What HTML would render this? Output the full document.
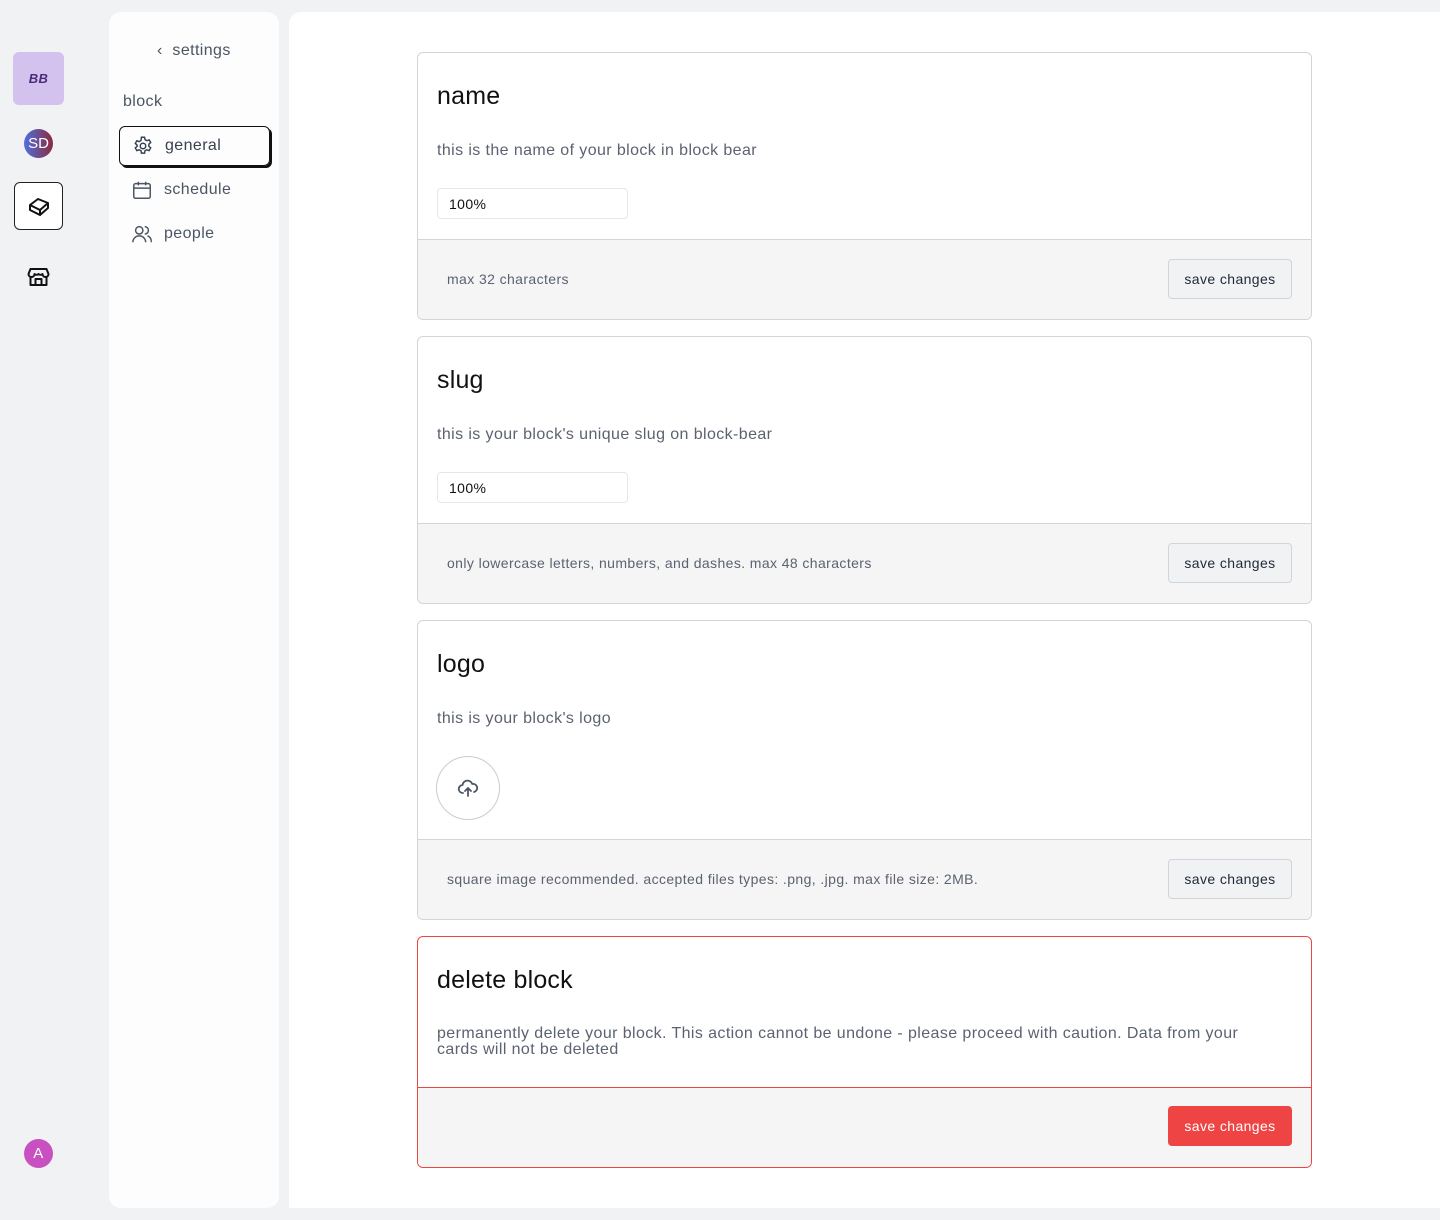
<!DOCTYPE html>
<html><head><style>
*{box-sizing:border-box;margin:0;padding:0}
body{width:1440px;height:1220px;background:#f1f2f4;font-family:"Liberation Sans",sans-serif;position:relative;overflow:hidden;color:#111;letter-spacing:0.4px}
.abs{position:absolute}
.side{left:109px;top:12px;width:170px;height:1196px;background:#fdfdfd;border-radius:12px}
.main{left:289px;top:12px;width:1151px;height:1196px;background:#fff;border-top-left-radius:12px}
.nav{position:absolute;left:10px;width:151px;height:40px;display:flex;align-items:center;padding-left:12px;font-size:16px;color:#4b5563;gap:11px}
.card{position:absolute;left:417px;width:895px;border:1px solid #d4d4d8;border-radius:6px;background:#fff;overflow:hidden}
.card h2{position:absolute;left:19px;font-size:25px;font-weight:normal;color:#111;letter-spacing:0.2px}
.card p.d{position:absolute;left:19px;font-size:16px;color:#5b6270}
.inp{position:absolute;left:19px;width:191px;height:31px;border:1px solid #e5e7eb;border-radius:4px;font-size:14px;padding:7px 11px;color:#111}
.foot{position:absolute;left:0;right:0;bottom:0;height:80px;background:#f5f5f5;border-top:1px solid #d4d4d8}
.foot span{position:absolute;left:29px;top:31px;font-size:14px;color:#5b6270}
.btn{position:absolute;right:19px;top:19px;width:124px;height:40px;border:1px solid #d1d5db;border-radius:4px;background:#f1f2f4;font-size:14px;color:#1f2937;display:flex;align-items:center;justify-content:center}
</style></head><body>
<div class="abs" style="left:13px;top:52px;width:51px;height:53px;background:#d4c2ee;border-radius:6px;display:flex;align-items:center;justify-content:center;font-style:italic;font-weight:bold;font-size:13px;color:#4c2a7a">BB</div>
<div class="abs" style="left:24px;top:129px;width:29px;height:29px;border-radius:50%;background:linear-gradient(90deg,#4f6fe0,#8b2a3c);color:#fff;font-size:15px;letter-spacing:0;display:flex;align-items:center;justify-content:center">SD</div>
<div class="abs" style="left:14px;top:182px;width:49px;height:48px;border:1px solid #222;border-radius:6px;background:#fff;display:flex;align-items:center;justify-content:center">
<svg width="24" height="24" viewBox="0 0 24 24" fill="none" stroke="#111" stroke-width="2" stroke-linejoin="round"><path d="M3 11l8-6 10 4-8 7z M3 11v5l10 5v-5 M13 16l8-7v5l-8 7"/></svg></div>
<div class="abs" style="left:26px;top:265px"><svg width="25" height="24" viewBox="0 0 24 24" fill="none" stroke="#111" stroke-width="2" stroke-linejoin="round"><path d="M4 4h16l2 5a3 3 0 0 1-6 0 3 3 0 0 1-4 0 3 3 0 0 1-4 0 3 3 0 0 1-6 0z M4 11v9h16v-9 M9 20v-6h6v6"/></svg></div>
<div class="abs" style="left:24px;top:1139px;width:29px;height:29px;border-radius:50%;background:#c850c0;color:#fff;font-size:15px;display:flex;align-items:center;justify-content:center">A</div>

<div class="abs side">
 <div class="abs" style="left:48px;top:30px;font-size:16px;color:#4b5563">‹&nbsp; settings</div>
 <div class="abs" style="left:14px;top:81px;font-size:16px;color:#4b5563">block</div>
 <div class="nav" style="top:114px;border:1px solid #111;border-radius:6px;box-shadow:2px 2px 0 #111;color:#374151">
  <svg width="22" height="22" viewBox="0 0 24 24" fill="none" stroke="#374151" stroke-width="1.6"><circle cx="12" cy="12" r="3"/><path d="M10.3 2.5h3.4l.5 2.6 2 1.1 2.5-.9 1.7 2.9-2 1.8v2.3l2 1.8-1.7 2.9-2.5-.9-2 1.1-.5 2.6h-3.4l-.5-2.6-2-1.1-2.5.9-1.7-2.9 2-1.8V11l-2-1.8 1.7-2.9 2.5.9 2-1.1z"/></svg>general</div>
 <div class="nav" style="top:158px"><svg width="22" height="22" viewBox="0 0 24 24" fill="none" stroke="#4b5563" stroke-width="1.6"><rect x="3" y="5" width="18" height="16" rx="2"/><path d="M3 10h18M8 3v4M16 3v4"/></svg>schedule</div>
 <div class="nav" style="top:202px"><svg width="22" height="22" viewBox="0 0 24 24" fill="none" stroke="#4b5563" stroke-width="1.6"><circle cx="9" cy="8" r="4"/><path d="M2 21a7 7 0 0 1 14 0M15 4a4 4 0 0 1 0 8M18 14a6 6 0 0 1 4 7"/></svg>people</div>
</div>
<div class="abs main"></div>

<div class="card" style="top:52px;height:268px">
 <h2 style="top:29px">name</h2><p class="d" style="top:89px">this is the name of your block in block bear</p>
 <div class="inp" style="top:135px">100%</div>
 <div class="foot"><span>max 32 characters</span><div class="btn">save changes</div></div>
</div>
<div class="card" style="top:336px;height:268px">
 <h2 style="top:29px">slug</h2><p class="d" style="top:89px">this is your block's unique slug on block-bear</p>
 <div class="inp" style="top:135px">100%</div>
 <div class="foot"><span>only lowercase letters, numbers, and dashes. max 48 characters</span><div class="btn">save changes</div></div>
</div>
<div class="card" style="top:620px;height:300px">
 <h2 style="top:29px">logo</h2><p class="d" style="top:89px">this is your block's logo</p>
 <div class="abs" style="left:18px;top:135px;width:64px;height:64px;border:1px solid #ccc;border-radius:50%;display:flex;align-items:center;justify-content:center">
 <svg width="24" height="24" viewBox="0 0 24 24" fill="none" stroke="#4b5563" stroke-width="1.8" stroke-linecap="round" stroke-linejoin="round"><path d="M7 17a4 4 0 0 1-.5-8 5 5 0 0 1 9.7-1A4 4 0 0 1 18 16M12 20v-8M9 15l3-3 3 3"/></svg></div>
 <div class="foot"><span>square image recommended. accepted files types: .png, .jpg. max file size: 2MB.</span><div class="btn">save changes</div></div>
</div>
<div class="card" style="top:936px;height:232px;border-color:#ef4444">
 <h2 style="top:29px">delete block</h2><p class="d" style="top:89px;width:830px;line-height:16px">permanently delete your block. This action cannot be undone - please proceed with caution. Data from your cards will not be deleted</p>
 <div class="foot" style="border-top:none"><div style="position:absolute;left:0;right:0;top:0;height:1px;background:#ef4444"></div><div class="btn" style="background:#ef4444;border-color:#ef4444;color:#fff">save changes</div></div>
</div>
</body></html>
